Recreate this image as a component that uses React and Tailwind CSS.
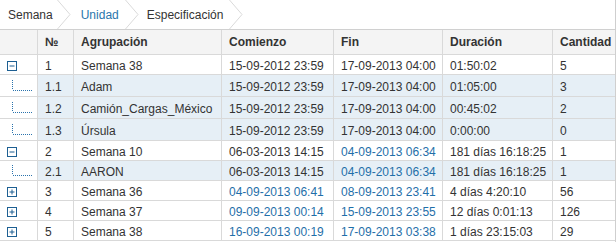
import React from "react";

const cols = [38, 36, 148, 112, 109, 110, 62];

const rows = [
  { t: "minus", h: "h-[20px]", n: "1", g: "Semana 38", c: "15-09-2012 23:59", f: "17-09-2013 04:00", d: "01:50:02", q: "5" },
  { t: "leaf", h: "h-[22px]", n: "1.1", g: "Adam", c: "15-09-2012 23:59", f: "17-09-2013 04:00", d: "01:05:00", q: "3" },
  { t: "leaf", h: "h-[22px]", n: "1.2", g: "Camión_Cargas_México", c: "15-09-2012 23:59", f: "17-09-2013 04:00", d: "00:45:02", q: "2" },
  { t: "leaf", h: "h-[22px]", n: "1.3", g: "Úrsula", c: "15-09-2012 23:59", f: "17-09-2013 04:00", d: "0:00:00", q: "0" },
  { t: "minus", h: "h-[20px]", n: "2", g: "Semana 10", c: "06-03-2013 14:15", f: "04-09-2013 06:34", fb: true, d: "181 días 16:18:25", q: "1" },
  { t: "leaf", h: "h-[20px]", n: "2.1", g: "AARON", c: "06-03-2013 14:15", f: "04-09-2013 06:34", fb: true, d: "181 días 16:18:25", q: "1" },
  { t: "plus", h: "h-[20px]", n: "3", g: "Semana 36", c: "04-09-2013 06:41", cb: true, f: "08-09-2013 23:41", fb: true, d: "4 días 4:20:10", q: "56" },
  { t: "plus", h: "h-[20px]", n: "4", g: "Semana 37", c: "09-09-2013 00:14", cb: true, f: "15-09-2013 23:55", fb: true, d: "12 días 0:01:13", q: "126" },
  { t: "plus", h: "h-[20px]", n: "5", g: "Semana 38", c: "16-09-2013 00:19", cb: true, f: "17-09-2013 03:38", fb: true, d: "1 días 23:15:03", q: "29" },
];

function Chevron() {
  return (
    <svg width="14" height="29" viewBox="0 0 14 29" className="shrink-0">
      <polyline points="0.5,0 13,14.5 0.5,29" fill="none" stroke="#dadada" strokeWidth="1" />
    </svg>
  );
}

function ToggleBox({ plus }) {
  return (
    <svg width="10" height="10" viewBox="0 0 10 10">
      <rect x="0.5" y="0.5" width="9" height="9" fill="white" stroke="#1d5f92" strokeWidth="1" />
      <line x1="2.5" y1="5" x2="7.5" y2="5" stroke="#1d5f92" strokeWidth="1" />
      {plus && <line x1="5" y1="2.5" x2="5" y2="7.5" stroke="#1d5f92" strokeWidth="1" />}
    </svg>
  );
}

function TreeLine() {
  return (
    <svg width="38" height="20" viewBox="0 0 38 20" className="absolute left-0 top-1/2 -translate-y-1/2">
      <line x1="12.5" y1="4" x2="12.5" y2="14" stroke="#2a73ad" strokeWidth="1" strokeDasharray="1 1" />
      <line x1="13" y1="14.5" x2="32" y2="14.5" stroke="#2a73ad" strokeWidth="1" strokeDasharray="1 1" />
    </svg>
  );
}

function Cell({ w, children, className = "", last }) {
  return (
    <div
      style={{ width: w }}
      className={`shrink-0 flex items-center pl-[7px] overflow-hidden whitespace-nowrap border-b border-[#d9d9d9] ${last ? "" : "border-r"} ${className}`}
    >
      {children}
    </div>
  );
}

export default function App() {
  return (
    <div
      className="w-[616px] h-[242px] overflow-hidden bg-white text-[12px] text-[#333333] border-r border-[#cfcfcf]"
      style={{ fontFamily: '"Liberation Sans", Arial, sans-serif' }}
    >
      <div className="flex items-center h-[29px] bg-white">
        <span className="pl-[8px] pr-[4px]">Semana</span>
        <Chevron />
        <span className="pl-[10px] pr-[6px] text-[#2a76ad]">Unidad</span>
        <Chevron />
        <span className="pl-[8px] pr-[6px]">Especificación</span>
        <Chevron />
      </div>
      <div className="flex h-[26px] bg-[#f4f4f4] border-t border-[#d0d0d0] font-bold">
        {["", "№", "Agrupación", "Comienzo", "Fin", "Duración", "Cantidad"].map((h, i) => (
          <Cell key={i} w={cols[i]} last={i === 6}>
            {h}
          </Cell>
        ))}
      </div>
      {rows.map((r, i) => {
        const sub = r.t === "leaf";
        const bg = sub ? "bg-[#e6eff6]" : "";
        return (
          <div key={i} className={`flex ${r.h}`}>
            <div
              style={{ width: cols[0] }}
              className="shrink-0 relative flex items-center pl-[7px] pt-[2px] border-r border-b border-[#d9d9d9] bg-white"
            >
              {sub ? <TreeLine /> : <ToggleBox plus={r.t === "plus"} />}
            </div>
            <Cell w={cols[1]} className={`pt-[2px] ${bg}`}>{r.n}</Cell>
            <Cell w={cols[2]} className={`pt-[2px] ${bg}`}>{r.g}</Cell>
            <Cell w={cols[3]} className={`pt-[2px] ${bg} ${r.cb ? "text-[#1f6fa9]" : ""}`}>{r.c}</Cell>
            <Cell w={cols[4]} className={`pt-[2px] ${bg} ${r.fb ? "text-[#1f6fa9]" : ""}`}>{r.f}</Cell>
            <Cell w={cols[5]} className={`pt-[2px] ${bg}`}>{r.d}</Cell>
            <Cell w={cols[6]} className={`pt-[2px] ${bg}`} last>{r.q}</Cell>
          </div>
        );
      })}
    </div>
  );
}
